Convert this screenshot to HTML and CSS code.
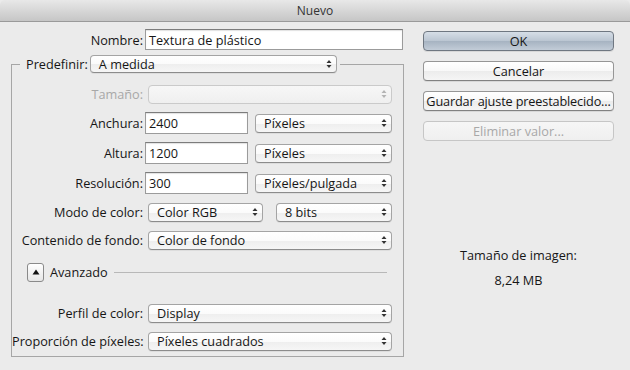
FILE: index.html
```html
<!DOCTYPE html>
<html lang="es">
<head>
<meta charset="utf-8">
<title>Nuevo</title>
<link rel="stylesheet" href="styles.css">
</head>
<body>
<div class="window">
  <div class="titlebar">Nuevo</div>
  <div class="content">
    <div class="left">
      <div class="name-row">
        <span class="lbl">Nombre:</span>
        <div class="field name">Textura de plástico</div>
      </div>
      <fieldset class="group">
        <legend class="legend">
          <span class="legend-lbl">Predefinir:</span>
          <div class="popup preset">A medida<svg class="arr" viewBox="0 0 6 10" width="6" height="10"><path d="M0.5 4 L3 1 L5.5 4 Z M0.5 6 L3 9 L5.5 6 Z"/></svg></div>
        </legend>

        <div class="row r-size">
          <span class="flab disabled">Tamaño:</span>
          <div class="popup full off"><svg class="arr" viewBox="0 0 6 10" width="6" height="10"><path d="M0.5 4 L3 1 L5.5 4 Z M0.5 6 L3 9 L5.5 6 Z"/></svg></div>
        </div>
        <div class="row r-w">
          <span class="flab">Anchura:</span>
          <div class="field num">2400</div>
          <div class="popup unit">Píxeles<svg class="arr" viewBox="0 0 6 10" width="6" height="10"><path d="M0.5 4 L3 1 L5.5 4 Z M0.5 6 L3 9 L5.5 6 Z"/></svg></div>
        </div>
        <div class="row r-h">
          <span class="flab">Altura:</span>
          <div class="field num">1200</div>
          <div class="popup unit">Píxeles<svg class="arr" viewBox="0 0 6 10" width="6" height="10"><path d="M0.5 4 L3 1 L5.5 4 Z M0.5 6 L3 9 L5.5 6 Z"/></svg></div>
        </div>
        <div class="row r-res">
          <span class="flab">Resolución:</span>
          <div class="field num">300</div>
          <div class="popup unit">Píxeles/pulgada<svg class="arr" viewBox="0 0 6 10" width="6" height="10"><path d="M0.5 4 L3 1 L5.5 4 Z M0.5 6 L3 9 L5.5 6 Z"/></svg></div>
        </div>
        <div class="row r-mode">
          <span class="flab">Modo de color:</span>
          <div class="popup mode">Color RGB<svg class="arr" viewBox="0 0 6 10" width="6" height="10"><path d="M0.5 4 L3 1 L5.5 4 Z M0.5 6 L3 9 L5.5 6 Z"/></svg></div>
          <div class="popup bits">8 bits<svg class="arr" viewBox="0 0 6 10" width="6" height="10"><path d="M0.5 4 L3 1 L5.5 4 Z M0.5 6 L3 9 L5.5 6 Z"/></svg></div>
        </div>
        <div class="row r-bg">
          <span class="flab">Contenido de fondo:</span>
          <div class="popup full">Color de fondo<svg class="arr" viewBox="0 0 6 10" width="6" height="10"><path d="M0.5 4 L3 1 L5.5 4 Z M0.5 6 L3 9 L5.5 6 Z"/></svg></div>
        </div>
        <div class="row r-adv">
          <div class="disclose"><svg viewBox="0 0 8 6" width="8" height="6"><path d="M0.5 5.5 L4 0.5 L7.5 5.5 Z"/></svg></div>
          <span class="adv-lbl">Avanzado</span>
          <div class="sep"></div>
        </div>
        <div class="row r-prof">
          <span class="flab">Perfil de color:</span>
          <div class="popup full">Display<svg class="arr" viewBox="0 0 6 10" width="6" height="10"><path d="M0.5 4 L3 1 L5.5 4 Z M0.5 6 L3 9 L5.5 6 Z"/></svg></div>
        </div>
        <div class="row r-ratio">
          <span class="flab">Proporción de píxeles:</span>
          <div class="popup full">Píxeles cuadrados<svg class="arr" viewBox="0 0 6 10" width="6" height="10"><path d="M0.5 4 L3 1 L5.5 4 Z M0.5 6 L3 9 L5.5 6 Z"/></svg></div>
        </div>
      </fieldset>
    </div>
    <div class="right">
      <div class="btn default">OK</div>
      <div class="btn">Cancelar</div>
      <div class="btn guardar">Guardar ajuste preestablecido...</div>
      <div class="btn off">Eliminar valor...</div>
      <div class="info">
        <div class="info-lbl">Tamaño de imagen:</div>
        <div class="info-val">8,24 MB</div>
      </div>
    </div>
  </div>
</div>
</body>
</html>
```

FILE: styles.css
```css
* { box-sizing: border-box; }
html, body { margin: 0; padding: 0; }
body {
  background: #d8d8d8;
  font-family: "Open Sans", "DejaVu Sans", sans-serif;
  font-size: 12.7px;
  color: #161616;
}
.window {
  width: 630px;
  height: 370px;
  background: #ebebeb;
  display: flex;
  flex-direction: column;
  overflow: hidden;
}
.titlebar {
  height: 22px;
  line-height: 21px;
  font-size: 12px;
  text-align: center;
  color: #333;
  background: linear-gradient(#e8e8e8, #c6c6c6);
  border-bottom: 1px solid #9a9a9a;
  border-radius: 5px 5px 0 0;
}
.content {
  display: flex;
  padding-top: 7px;
}
.left { width: 404px; }
.name-row {
  display: flex;
  align-items: center;
  height: 21px;
}
.lbl {
  width: 143px;
  text-align: right;
  margin-right: 2px;
}
.field {
  background: #fff;
  border: 1px solid #9b9b9b;
  border-top-color: #7c7c7c;
  box-shadow: inset 0 1px 1px rgba(0,0,0,0.12);
  padding-left: 3px;
  display: flex;
  align-items: center;
}
.name { width: 258px; height: 21px; }
.num { width: 103px; height: 22px; }

.group {
  margin: 5px 0 0 11px;
  width: 393px;
  border: 1px solid #a6a6a6;
  padding: 0 0 4px 0;
  min-width: 0;
}
.legend {
  margin-left: 8px;
  padding: 0 3px 0 6px;
  display: flex;
  align-items: center;
}
.legend-lbl { margin-right: 2px; }
.row {
  display: flex;
  align-items: center;
  height: 22px;
}
.flab {
  width: 131px;
  text-align: right;
  margin-right: 2px;
  flex: none;
  white-space: nowrap;
}
.disabled { color: #a8a8a8; }

.popup {
  height: 19px;
  display: flex;
  align-items: center;
  padding-left: 8px;
  border: 1px solid #a4a4a4;
  border-bottom-color: #8c8c8c;
  border-radius: 4px;
  background: linear-gradient(#ffffff, #fbfbfb 50%, #eeeeee 51%, #f6f6f6);
  box-shadow: 0 1px 0 rgba(0,0,0,0.06);
  flex: none;
  white-space: nowrap;
}
.popup .arr {
  margin-left: auto;
  margin-right: 4px;
  fill: #333;
}
.popup.off {
  border-color: #cacaca;
  background: linear-gradient(#f7f7f7, #efefef);
  box-shadow: none;
}
.popup.off .arr { fill: #b4b4b4; }
.preset { width: 247px; height: 18px; }
.full { width: 244px; margin-left: 3px; }
.unit { width: 137px; margin-left: 7px; }
.mode { width: 115px; margin-left: 3px; }
.bits { width: 116px; margin-left: 13px; }

.r-size { margin-top: 10px; }
.r-w { margin-top: 7px; }
.r-h { margin-top: 8px; }
.r-res { margin-top: 8px; }
.r-mode { margin-top: 7px; }
.r-bg { margin-top: 6px; }
.r-adv { margin-top: 10px; }
.r-prof { margin-top: 19px; }
.r-ratio { margin-top: 6px; }

.disclose {
  margin-left: 15px;
  width: 17px;
  height: 19px;
  border: 1px solid #8a8a8a;
  border-radius: 3px;
  background: linear-gradient(#ffffff, #e6e6e6);
  display: flex;
  align-items: center;
  justify-content: center;
}
.disclose svg { fill: #111; }
.adv-lbl { margin-left: 6px; }
.sep {
  flex: 1;
  height: 1px;
  background: #b8b8b8;
  margin: 0 16px 0 6px;
}

.right {
  margin-left: 19px;
  width: 191px;
  padding-top: 2px;
  display: flex;
  flex-direction: column;
  gap: 10px;
}
.btn {
  height: 20px;
  border: 1px solid #969696;
  border-bottom-color: #818181;
  border-radius: 4px;
  background: linear-gradient(#ffffff, #f8f8f8 50%, #ececec 51%, #f5f5f5);
  box-shadow: 0 1px 0 rgba(0,0,0,0.08);
  display: flex;
  align-items: center;
  justify-content: center;
  white-space: nowrap;
}
.btn.guardar { letter-spacing: -0.15px; }
.btn.default {
  border-color: #6f7781;
  background: linear-gradient(#d6dee7, #bac5d1 50%, #a6b3c1 51%, #c2ccd7);
}
.btn.off {
  color: #a8a8a8;
  border-color: #c6c6c6;
  background: linear-gradient(#f6f6f6, #efefef);
  box-shadow: none;
}
.info {
  margin-top: 95px;
  text-align: center;
}
.info-val { margin-top: 7px; }
```
